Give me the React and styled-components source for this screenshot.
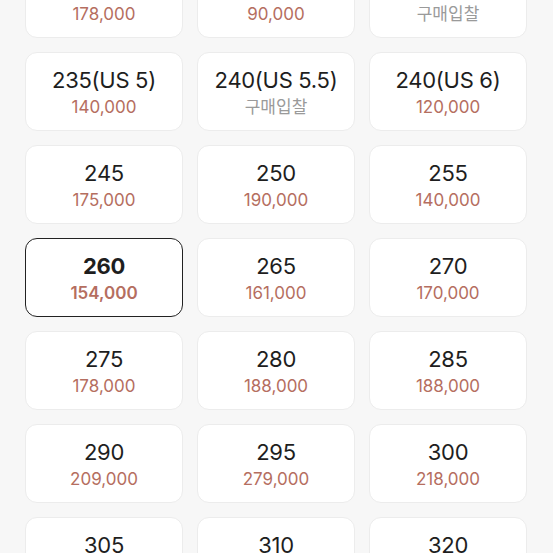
import React from "react";
import styled, { createGlobalStyle } from "styled-components";

const GlobalStyle = createGlobalStyle`
  html, body {
    margin: 0;
    padding: 0;
    background: #f7f7f7;
    font-family: "Inter", "Noto Sans CJK KR", sans-serif;
    overflow: hidden;
  }
`;

const Page = styled.div`
  width: 553px;
  height: 553px;
  overflow: hidden;
  background: #f7f7f7;
`;

const Grid = styled.div`
  display: grid;
  grid-template-columns: repeat(3, 158px);
  grid-auto-rows: 79px;
  column-gap: 14px;
  row-gap: 14px;
  padding: 0 26px 0 25px;
  margin-top: -41px;
`;

const Card = styled.div`
  box-sizing: border-box;
  display: flex;
  flex-direction: column;
  align-items: center;
  justify-content: center;
  gap: 4px;
  background: #fff;
  border: ${({ $selected }) => ($selected ? "1.5px solid #222" : "1px solid #ececec")};
  border-radius: 12px;
  padding-top: 2px;
`;

const SizeLabel = styled.div`
  font-size: 22px;
  line-height: 26px;
  color: #1e1e1e;
  font-weight: ${({ $selected }) => ($selected ? 700 : 400)};
  letter-spacing: -0.3px;
`;

const Price = styled.div`
  font-size: 17px;
  line-height: 21px;
  color: ${({ $bid }) => ($bid ? "#9a9a9a" : "#b56e60")};
  font-weight: ${({ $selected }) => ($selected ? 600 : 400)};
`;

const sizes = [
  ["230", "178,000"],
  ["230(US 4.5)", "90,000"],
  ["235", null],
  ["235(US 5)", "140,000"],
  ["240(US 5.5)", null],
  ["240(US 6)", "120,000"],
  ["245", "175,000"],
  ["250", "190,000"],
  ["255", "140,000"],
  ["260", "154,000", true],
  ["265", "161,000"],
  ["270", "170,000"],
  ["275", "178,000"],
  ["280", "188,000"],
  ["285", "188,000"],
  ["290", "209,000"],
  ["295", "279,000"],
  ["300", "218,000"],
  ["305", "230,000"],
  ["310", "245,000"],
  ["320", "260,000"],
];

const App = () => (
  <Page>
    <GlobalStyle />
    <Grid>
      {sizes.map(([size, price, selected]) => (
        <Card key={size + (price || "")} $selected={selected}>
          <SizeLabel $selected={selected}>{size}</SizeLabel>
          <Price $bid={!price} $selected={selected}>
            {price || "구매입찰"}
          </Price>
        </Card>
      ))}
    </Grid>
  </Page>
);

export default App;
